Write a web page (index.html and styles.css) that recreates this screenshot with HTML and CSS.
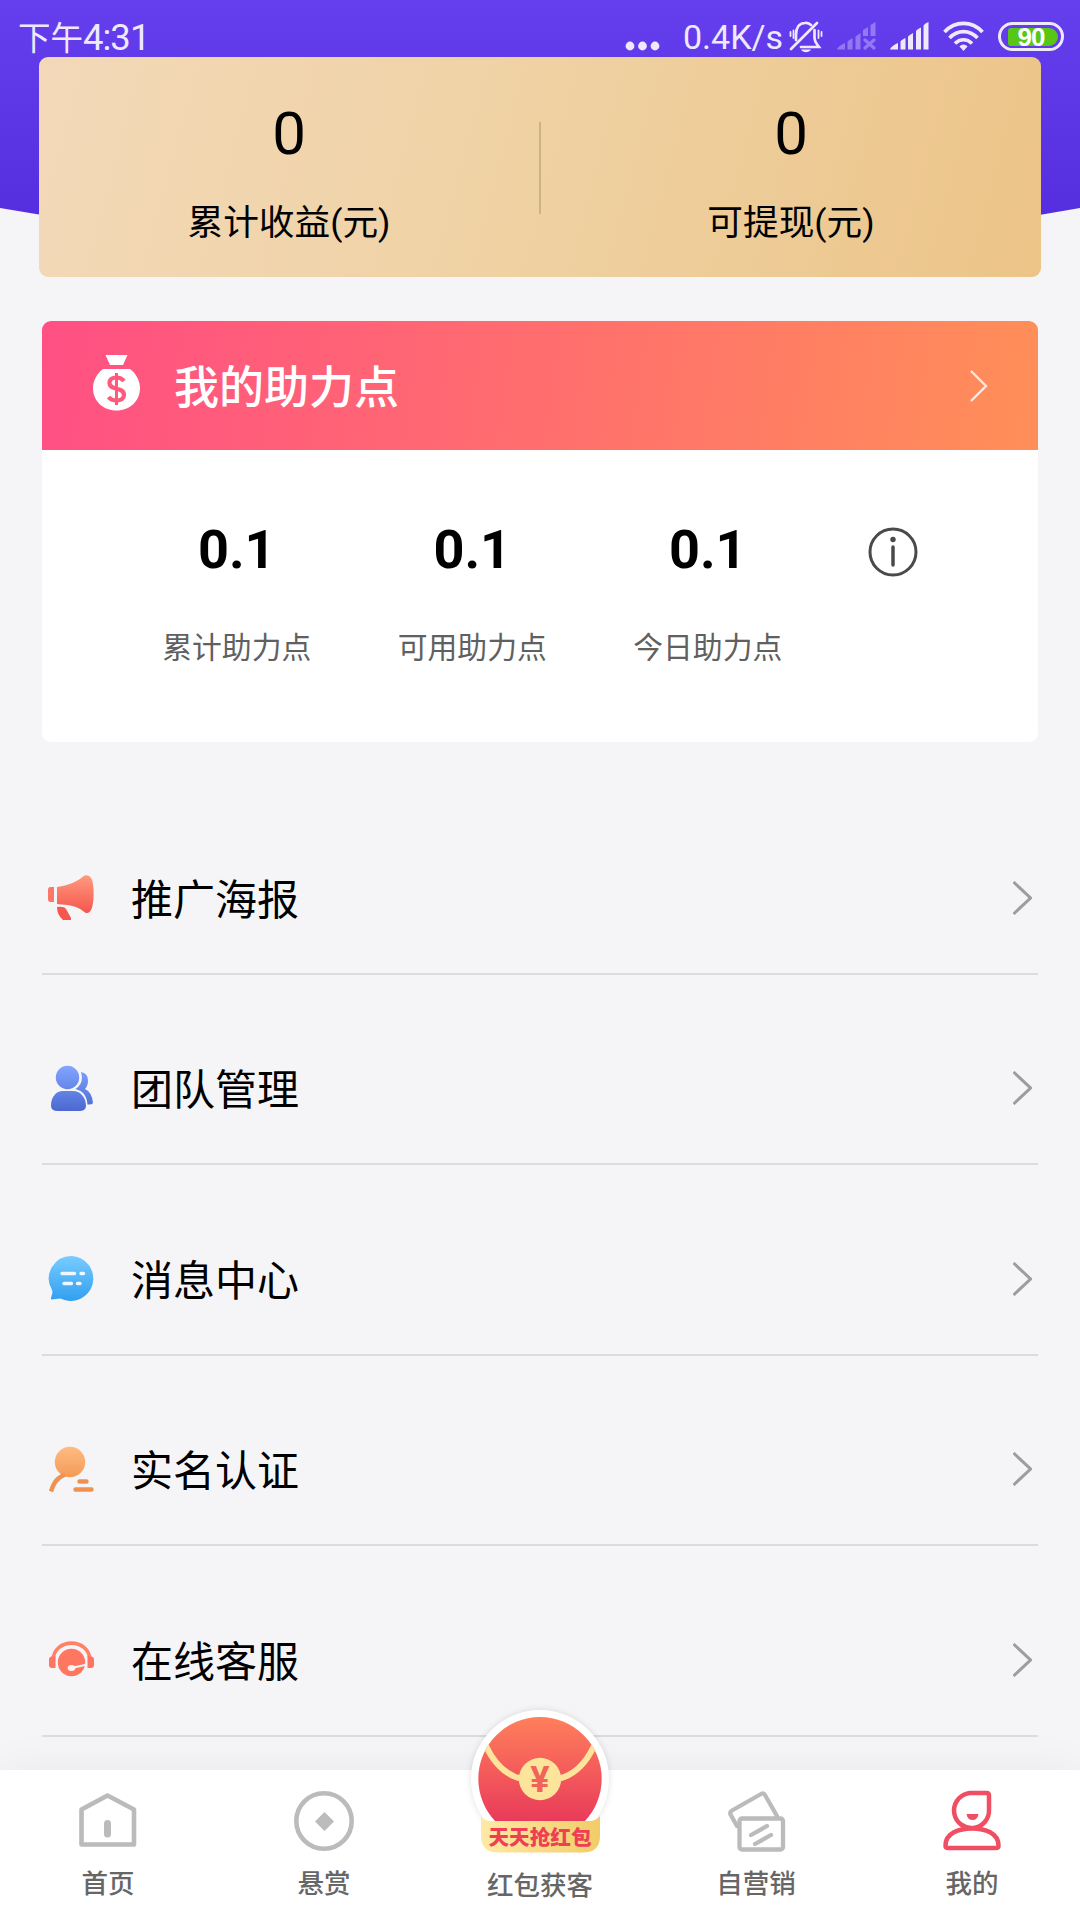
FILE: index.html
```html
<!DOCTYPE html>
<html lang="zh-CN">
<head>
<meta charset="utf-8">
<title>我的</title>
<link rel="stylesheet" href="styles.css">
</head>
<body>
<div class="app">
  <svg class="backdrop" width="1080" height="260" viewBox="0 0 1080 260" aria-hidden="true">
    <defs><linearGradient id="violet" x1="0" y1="0" x2="0" y2="1"><stop offset="0" stop-color="#653eee"/><stop offset="1" stop-color="#522bdc"/></linearGradient></defs>
    <path d="M0 0H1080V208Q540 304 0 208Z" fill="url(#violet)"/>
  </svg>

  <header class="status">
    <div class="clock"><span class="clock-cjk">下午</span>4:31</div>
    <div class="status-right">
      <svg class="more" width="36" height="12" viewBox="0 0 36 12"><g fill="currentColor"><circle cx="5" cy="6" r="4.4"/><circle cx="17.5" cy="6" r="4.4"/><circle cx="30" cy="6" r="4.4"/></g></svg>
      <span class="speed">0.4K/s</span>
      <svg class="bell" width="34" height="32" viewBox="0 0 34 32" fill="none" stroke="currentColor" stroke-width="2.7" stroke-linecap="round">
        <path d="M2 28L28 2"/><path d="M7 19V14C7 7 10 2 16 2C19 1.500 21 3 22 4"/><path d="M25.500 9V17C25.500 21 28 23 30 26H12"/><path d="M4.500 9.500V17M1.500 11V15M29.500 9.500V17M32.500 11V15" stroke-width="1.800"/><path d="M12 28.500H22C20 32 14 32 12 28.500Z" fill="currentColor" stroke="none"/>
      </svg>
      <svg class="signal dim" width="39" height="28" viewBox="0 0 39 28" fill="currentColor">
        <path d="M0 27.500Q1 24 8 21V27.500ZM10.500 19.500L15.500 16V27.500H10.500ZM18.500 14.500L23.500 11V27.500H18.500ZM26 8L31 5V14H26ZM33.500 3L38.500 0V14H33.500Z"/><path d="M28 18L37 26M37 18L28 26" stroke="currentColor" stroke-width="3.200" stroke-linecap="round"/>
      </svg>
      <svg class="signal" width="39" height="28" viewBox="0 0 39 28" fill="currentColor">
        <path d="M0 27.500Q1 24 8 21V27.500ZM10.500 19.500Q11 18 15.500 16V27.500H10.500ZM18 14.500Q19 13 23 11V27.500H18ZM26 9Q27 7 31 5.500V27.500H26ZM33.500 3.500Q35 1 38.500 0V27.500H33.500Z"/>
      </svg>
      <svg class="wifi" width="41" height="30" viewBox="0 0 41 30" fill="none" stroke="currentColor" stroke-width="3.600">
        <path d="M1.500 11C12 -.5 29 -.5 39.500 11M6.500 17C14.500 8.500 26.500 8.500 34.500 17M12 22.500C17 17.500 24 17.500 29 22.500"/><path d="M20.500 23.500C22 23.500 24 24.500 24.500 25.500L20.500 30L16.500 25.500C17 24.500 19 23.500 20.500 23.500Z" fill="currentColor" stroke="none"/>
      </svg>
      <div class="battery"><span class="charge">90</span></div>
    </div>
  </header>

  <main class="content">
    <section class="income">
      <div class="income-item"><div class="income-value">0</div><div class="income-label">累计收益(元)</div></div>
      <div class="income-rule"></div>
      <div class="income-item"><div class="income-value">0</div><div class="income-label">可提现(元)</div></div>
    </section>

    <section class="points">
      <div class="points-head">
        <svg class="bag" width="47" height="56" viewBox="0 0 47 56"><path fill="#fff" d="M12.500 0H34.500L30 10H17ZM10 14H37C44 19 47 27 47 33C47 46 37 55.500 23.500 55.500S0 46 0 33C0 27 3 19 10 14Z"/><path d="M31 26C29 23.500 26.500 22.500 23.500 22.500C19 22.500 16.500 24.500 16.500 28C16.500 36 31 31.500 31 40C31 43.500 28 45.500 23.500 45.500C20 45.500 17.500 44.500 15.500 42" fill="none" stroke="#ff5a7c" stroke-width="4.200"/><path d="M23.500 18V50" stroke="#ff5a7c" stroke-width="3"/></svg>
        <h2 class="points-title">我的助力点</h2>
        <svg class="points-arrow" width="18" height="32" viewBox="0 0 18 32"><path d="M1 1L16 16L1 31" fill="none" stroke="#ffe9e0" stroke-width="2.400"/></svg>
      </div>
      <div class="points-body">
        <div class="stat"><div class="stat-value">0.1</div><div class="stat-label">累计助力点</div></div>
        <div class="stat"><div class="stat-value">0.1</div><div class="stat-label">可用助力点</div></div>
        <div class="stat"><div class="stat-value">0.1</div><div class="stat-label">今日助力点</div></div>
        <svg class="info" width="50" height="50" viewBox="0 0 50 50"><circle cx="25" cy="25" r="23" fill="none" stroke="#4a4a4a" stroke-width="3"/><circle cx="25" cy="12.500" r="2.700" fill="#4a4a4a"/><path d="M25 20V38" stroke="#4a4a4a" stroke-width="3.500" stroke-linecap="round"/></svg>
      </div>
    </section>

    <ul class="menu">
      <li class="row">
        <svg class="row-icon" width="48" height="48" viewBox="0 0 48 48"><defs><linearGradient id="coral" x1="0" y1="0" x2="0" y2="1"><stop offset="0" stop-color="#ff9a7e"/><stop offset="1" stop-color="#f5564e"/></linearGradient></defs><path fill="url(#coral)" d="M10 13C23 11 31 7 36 2.500C39 .5 42 1 44 4C47.500 9 47.500 29 44.500 35C42.500 40 39 40 36 37C30 32 22 31 10 30Z"/><path fill="#fd7668" d="M7 13V28H3.500Q1 28 1 25V16Q1 13 3.500 13Z"/><path fill="#f5574f" d="M10 33Q17 32 19 35L24 44V46H16Q10 41 10 33Z"/></svg>
        <span class="row-text">推广海报</span>
        <svg class="row-arrow" width="19" height="34" viewBox="0 0 19 34"><path d="M.5 1L17.500 17L.5 33" fill="none" stroke="#9d9d9f" stroke-width="3"/></svg>
      </li>
      <li class="row">
        <svg class="row-icon" width="48" height="48" viewBox="0 0 48 48"><defs><linearGradient id="blue" gradientUnits="userSpaceOnUse" x1="0" y1="1" x2="0" y2="46"><stop offset="0" stop-color="#82a5ff"/><stop offset="1" stop-color="#4b68d0"/></linearGradient></defs><g fill="url(#blue)"><circle cx="20.500" cy="12.500" r="11.700"/><path d="M4 41C4 32 9 26 16 26H26C33 26 39 32 39 41Q39 46 32 46H11Q4 46 4 41ZM34 7Q41 8 41 15.500Q41 21 38 24Q45 27 46 38Q45 40 40.500 39.500C40 31 36 26 28.500 24Q35 20 35 12Z"/></g></svg>
        <span class="row-text">团队管理</span>
        <svg class="row-arrow" width="19" height="34" viewBox="0 0 19 34"><path d="M.5 1L17.500 17L.5 33" fill="none" stroke="#9d9d9f" stroke-width="3"/></svg>
      </li>
      <li class="row">
        <svg class="row-icon" width="48" height="48" viewBox="0 0 48 48"><defs><linearGradient id="sky" x1="0" y1="0" x2="0" y2="1"><stop offset="0" stop-color="#78ccff"/><stop offset="1" stop-color="#319ff0"/></linearGradient></defs><path fill="url(#sky)" d="M24.500 1A22.500 22.500 0 1 1 13.500 43.500L4.500 44.500Q3.500 44 4.500 41Q6 37 5 35A22.500 22.500 0 0 1 24.500 1Z"/><path d="M15 18.500H27.500M34 18.500H36.500M17 28.500H24.500M30.500 28.500H33" stroke="#f0f8ff" stroke-width="3.400" stroke-linecap="round"/></svg>
        <span class="row-text">消息中心</span>
        <svg class="row-arrow" width="19" height="34" viewBox="0 0 19 34"><path d="M.5 1L17.500 17L.5 33" fill="none" stroke="#9d9d9f" stroke-width="3"/></svg>
      </li>
      <li class="row">
        <svg class="row-icon" width="48" height="48" viewBox="0 0 48 48"><defs><linearGradient id="amber" gradientUnits="userSpaceOnUse" x1="0" y1="1" x2="0" y2="46"><stop offset="0" stop-color="#ffbb80"/><stop offset="1" stop-color="#ee8a44"/></linearGradient></defs><circle cx="23" cy="16" r="15.200" fill="url(#amber)"/><path d="M18 28.500C10 32 7 36 4 45.500" fill="none" stroke="#f0924f" stroke-width="4.400"/><path d="M32.500 35.500H39.500M28.500 43.500H44.500" stroke="#f0924f" stroke-width="4.400" stroke-linecap="round"/></svg>
        <span class="row-text">实名认证</span>
        <svg class="row-arrow" width="19" height="34" viewBox="0 0 19 34"><path d="M.5 1L17.500 17L.5 33" fill="none" stroke="#9d9d9f" stroke-width="3"/></svg>
      </li>
      <li class="row">
        <svg class="row-icon" width="48" height="48" viewBox="0 0 48 48"><path d="M6 24C7 1.500 42 1.500 43 24" fill="none" stroke="#ff8267" stroke-width="3.600"/><path fill="#ff7561" d="M8.500 20V32H5Q2 32 2 29V23Q2 20 8.500 20ZM40.500 20V32H44Q47 32 47 29V23Q47 20 40.500 20Z"/><circle cx="24.500" cy="26.500" r="13.700" fill="#ff7761"/><path d="M24.500 32L40 28.500" stroke="#f5f5f8" stroke-width="2"/><ellipse cx="24.500" cy="32" rx="3.800" ry="2.900" fill="#fff2ef"/></svg>
        <span class="row-text">在线客服</span>
        <svg class="row-arrow" width="19" height="34" viewBox="0 0 19 34"><path d="M.5 1L17.500 17L.5 33" fill="none" stroke="#9d9d9f" stroke-width="3"/></svg>
      </li>
    </ul>
  </main>

  <nav class="tabs">
    <a class="tab">
      <svg width="64" height="64" viewBox="0 0 64 64" fill="none" stroke="#bbb" stroke-width="4.600"><path d="M5.500 20.500L31.500 6.500L58 20.500V55.500H5.500Z" stroke-linejoin="round"/><path d="M31.500 34.500V45" stroke-width="7" stroke-linecap="round"/></svg>
      <span class="tab-label">首页</span>
    </a>
    <a class="tab">
      <svg width="64" height="64" viewBox="0 0 64 64"><circle cx="32" cy="32" r="27.700" fill="none" stroke="#bbb" stroke-width="4.600"/><path d="M32.500 23L42 32.500L32.500 42L23 32.500Z" fill="#bbb"/></svg>
      <span class="tab-label">悬赏</span>
    </a>
    <a class="tab tab-center">
      <svg class="packet" width="150" height="150" viewBox="0 0 150 150">
        <defs>
          <linearGradient id="red" x1="0" y1="0" x2="0" y2="1"><stop offset="0" stop-color="#ff7f5b"/><stop offset="1" stop-color="#e93a5a"/></linearGradient>
          <linearGradient id="gold"><stop offset="0" stop-color="#ffe9a6"/><stop offset="1" stop-color="#f1cd68"/></linearGradient>
          <clipPath id="disc"><path d="M0 0H150V117H0Z"/></clipPath>
          <clipPath id="round"><circle cx="75" cy="75" r="61.700"/></clipPath>
        </defs>
        <circle class="packet-ring" cx="75" cy="75" r="69" fill="#fff"/>
        <path d="M31.500 118.500A61.700 61.700 0 1 1 118.500 118.500Z" fill="url(#red)" clip-path="url(#disc)"/>
        <path d="M21 42C28 57 40 71 57 75M129 42C122 57 110 71 93 75" fill="none" stroke="#fde49b" stroke-width="6" clip-path="url(#round)"/>
        <circle cx="75" cy="75" r="21.200" fill="#fde49b"/>
        <text class="yen" x="75" y="87.500" text-anchor="middle">¥</text>
        <path d="M16 112Q19 117 26 117H124Q131 117 135 112V132Q135 148.500 118 148.500H33Q16 148.500 16 132Z" fill="url(#gold)"/>
        <text class="ribbon" x="75" y="140.500" text-anchor="middle">天天抢红包</text>
      </svg>
      <span class="tab-label">红包获客</span>
    </a>
    <a class="tab">
      <svg width="64" height="64" viewBox="0 0 64 64" fill="none" stroke="#bbb" stroke-width="4.300" stroke-linejoin="round" stroke-linecap="round"><path d="M13 37L6.500 25.500Q5.500 23 8 21.500L37 5Q39.500 3.500 41 6L53 27"/><rect x="15.500" y="29.500" width="43.500" height="31" rx="2.500"/><path d="M27 46L43 37M31 55L47 46"/></svg>
      <span class="tab-label">自营销</span>
    </a>
    <a class="tab">
      <svg width="64" height="64" viewBox="0 0 64 64" fill="none" stroke="#f04e63" stroke-width="4.500" stroke-linejoin="round"><path d="M30 4H46.500Q49 4 49 6.500V20.500A17.500 17.500 0 1 1 27 4.600Q28.500 4 30 4Z"/><path d="M5.500 56.500C5.500 44 19 39.500 32 39.500S58.500 44 58.500 56.500Q58.500 59 56 59H8Q5.500 59 5.500 56.500Z"/><path d="M26.500 25H38.500Q37.500 31 32.500 31T26.500 25Z" fill="#f04e63" stroke="none"/></svg>
      <span class="tab-label">我的</span>
    </a>
  </nav>
</div>
</body>
</html>
```

FILE: styles.css
```css
* { box-sizing: border-box; }

body {
  margin: 0;
  font-family: Roboto, "Noto Sans CJK SC", sans-serif;
  color: #000;
  background: #f5f5f8;
}

svg { display: block; flex: none; }

.app {
  position: relative;
  width: 1080px;
  height: 1920px;
  display: flex;
  flex-direction: column;
  overflow: hidden;
}

.backdrop { position: absolute; top: 0; left: 0; }

/* status bar */
.status {
  position: relative;
  height: 57px;
  padding: 0 16px 0 18px;
  display: flex;
  justify-content: space-between;
  color: #efe9fe;
}

.clock {
  display: flex;
  align-items: baseline;
  padding-top: 15px;
  font-size: 36.5px;
  line-height: 46px;
  letter-spacing: -1px;
}

.clock-cjk { font-size: 32.5px; letter-spacing: 0; }

.status-right { display: flex; align-items: flex-start; }
.more { margin: 39.5px 22px 0 0; }
.speed { width: 106px; padding-top: 17px; font-size: 34px; line-height: 40px; }
.bell { margin: 21px 14px 0 0; }
.signal { margin: 22px 14px 0 0; }
.dim { opacity: .35; }
.wifi { margin-top: 21px; }

.battery {
  width: 66px;
  height: 29px;
  margin: 22px 0 0 14px;
  padding: 3px;
  border: 3px solid #efe9fe;
  border-radius: 15px;
}

.charge {
  display: block;
  width: 50px;
  height: 18px;
  margin: -.5px 0 0 4px;
  border-radius: 3px 9px 9px 3px;
  background: #57c616;
  color: #fff;
  font-family: "Liberation Sans", sans-serif;
  font-size: 26px;
  font-weight: 700;
  line-height: 18px;
  text-align: center;
  text-indent: -4px;
  letter-spacing: -1px;
}

.content { position: relative; flex: 1; min-height: 0; overflow: hidden; }

/* income card */
.income {
  height: 220px;
  margin: 0 39px;
  display: flex;
  border-radius: 9px;
  background: linear-gradient(105deg, #f3d9b9, #efd1a2 50%, #ecc488);
}

.income-item { flex: 1; text-align: center; }
.income-value { margin-top: 42px; font-size: 60px; line-height: 70px; }
.income-label { margin-top: 28px; font-size: 35.7px; line-height: 52px; }
.income-rule { width: 2px; height: 92px; margin-top: 65px; background: #ceb287; }

/* points card */
.points {
  height: 421px;
  margin: 44px 42px 0;
  border-radius: 9px;
  overflow: hidden;
  background: #fff;
}

.points-head {
  height: 129px;
  padding: 0 50px 0 51px;
  display: flex;
  align-items: center;
  background: linear-gradient(98deg, #ff5084, #ff6e6e 50%, #ff8f58);
}

.bag { margin-top: -5px; }

.points-title {
  flex: 1;
  margin: 7px 0 0 34px;
  color: #fff;
  font-size: 45px;
  font-weight: 500;
  line-height: 60px;
}

.points-body { display: flex; padding: 68px 0 0 77px; }
.stat { width: 235.5px; text-align: center; }
.stat-value { font-size: 54px; font-weight: 700; line-height: 64px; }
.stat-label { margin-top: 44px; color: #606060; font-size: 29.8px; line-height: 44px; }
.info { margin: 9px 0 0 42px; }

/* menu */
.menu { margin: 42px 42px 0; padding: 0; list-style: none; }

.row {
  height: 190.5px;
  padding: 39px 6px 0 5px;
  display: flex;
  align-items: center;
  border-bottom: 2px solid #dcdcdf;
}

.row-icon { margin-top: 1px; }
.row-text { flex: 1; margin: 6px 0 0 36px; font-size: 42px; line-height: 60px; }

/* bottom tabs */
.tabs {
  position: relative;
  height: 150px;
  display: flex;
  background: #fff;
  box-shadow: 0 0 50px rgba(0, 0, 0, .05);
}

.tab {
  flex: 1;
  padding-top: 19px;
  display: flex;
  flex-direction: column;
  align-items: center;
}

.tab-label {
  margin-top: 11px;
  color: #666;
  font-size: 26.5px;
  font-weight: 500;
  line-height: 40px;
}

.packet { margin-top: -85px; overflow: visible; }
.packet-ring { filter: drop-shadow(0 0 3px rgba(0, 0, 0, .12)); }
.tab-center .tab-label { margin-top: 12px; }

.yen {
  font: 700 36px Roboto, sans-serif;
  fill: #f2635a;
}

.ribbon {
  font: 900 20.6px "Noto Sans CJK SC", sans-serif;
  fill: #ee3f55;
}
```
